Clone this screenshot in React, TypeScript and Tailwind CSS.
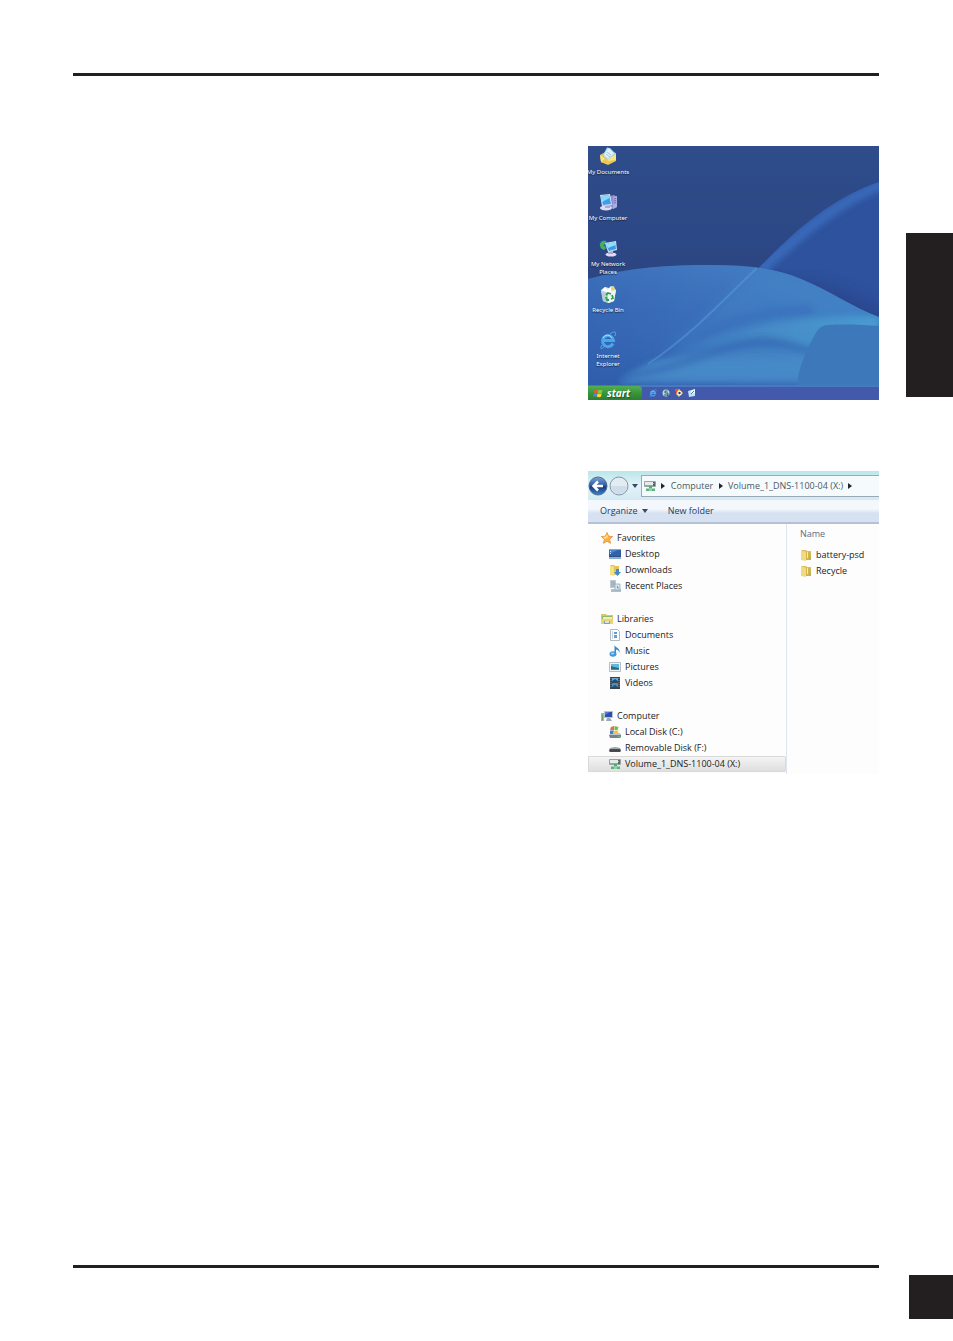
import { useState } from "react";
import type { ReactNode } from "react";

const DocumentsIcon = () => (
  <svg viewBox="0 0 18 18" className="size-[18px]" aria-hidden="true">
    <path d="M1 8 8 4l9 2v8l-8 4-7-3z" fill="#e8c14a" />
    <path d="m4 8 4-7.500 3 .5 5 5-1 5-7 2z" fill="#a9d3ee" />
    <path d="m5 8 4-6.500 2 1 4 4-6 5z" fill="#e3f3fc" />
    <path d="m8 5 4 3M7 7l4 3" stroke="#7db5dd" strokeWidth=".8" />
    <path d="m1 8 7 5 9-6v6l-8 4-7-2z" fill="#f8e583" />
    <path d="m2 15 5-4 2 3 8-1-8 4z" fill="#edc64f" />
  </svg>
);

const ComputerIcon = () => (
  <svg viewBox="0 0 18 18" className="size-[18px]" aria-hidden="true">
    <path d="m11 3 4-1 3 2v10l-4 2-3-2z" fill="#8d91cf" />
    <path d="m14 4 4-1v11l-4 2z" fill="#a9addf" />
    <path d="M14.500 6 17 5.500M14.500 8 17 7.500M14.500 10l2.500-.5" stroke="#5558a2" strokeWidth=".7" />
    <ellipse cx="7" cy="15" rx="6" ry="2.500" fill="#dddcf3" />
    <path d="M6 11h5v4H6z" fill="#aaa8d8" />
    <path d="m1 2 10-1 2 11-10 1z" fill="#d4e1f5" />
    <path d="m2 3 8-1 2 9-8 1z" fill="#3e9de8" />
    <path d="m2 3 8-1 .6 3L3 9z" fill="#85d9fb" />
  </svg>
);

const NetworkIcon = () => (
  <svg viewBox="0 0 18 18" className="size-[18px]" aria-hidden="true">
    <circle cx="5" cy="6" r="4.500" fill="#2861bb" />
    <path d="M1 5c1-3 4-4 6-3L6 5 4 6l3 3-2 2C2 10 1 8 1 5" fill="#48b351" />
    <ellipse cx="12" cy="15.500" rx="5.500" ry="2" fill="#dedcf2" />
    <path d="M9 11h5v4H9z" fill="#aba9d5" />
    <path d="m6 4 11-2 1 9-9 2z" fill="#d2e2f5" />
    <path d="m7 5 9-2 1 7-7 2z" fill="#3b9be6" />
    <path d="m7 5 9-2 .5 3L9 9z" fill="#8ce2fc" />
  </svg>
);

const RecycleIcon = () => (
  <svg viewBox="0 0 18 18" className="size-[18px]" aria-hidden="true">
    <path d="m2 5 4-3 4 1 3-2 4 4-2 11-5 2-6-2z" fill="#dbe8ed" />
    <path d="m3 5 3-3 3 3 3-4 3 4-5 3z" fill="#fff" />
    <path d="m12 2 3-1 1 4-4 1z" fill="#e9d86a" />
    <path d="m2 6 7 2v10l-5-2z" fill="#b9cdd6" />
    <path d="m9 8 8-3-2 11-6 2z" fill="#edf5f5" />
    <path d="m7 10 2-2 3 1M13 10l1 3-2 1M10 15H8l-1-3" fill="none" stroke="#28a448" strokeWidth="1.800" />
  </svg>
);

const ExplorerIcon = ({ small = false }: { small?: boolean }) => (
  <svg viewBox="0 0 18 18" className={small ? "size-2" : "size-[18px]"} aria-hidden="true">
    <path
      d="M14 12.500A5.500 5.500 0 1 1 14.500 9.500H4"
      fill="none"
      stroke="#4aa6ea"
      strokeWidth="3"
    />
    <path d="M4 7a5 5 0 0 1 9 0" fill="none" stroke="#a4e0ff" strokeWidth="1" />
    <path
      d="M3 14C0 19 3 18 6 15M11 3c4-3 7-3 5 2"
      fill="none"
      stroke="#5fa9df"
      strokeWidth="1"
    />
  </svg>
);

const WindowsFlag = () => (
  <svg viewBox="0 0 12 12" className="size-[10px]" aria-hidden="true">
    <path d="M2 2q2-1 4 0L5 6Q3 5 1 6z" fill="#f05a2d" />
    <path d="M6.500 2q2 1 5 0l-1 4q-2 1-5 0z" fill="#7fcc3c" />
    <path d="M1 6.500q2-1 4 0l-1 4q-2-1-4 0z" fill="#4a86e8" />
    <path d="M5.500 6.500q2 1 5 0l-1 4q-2 1-5 0z" fill="#fbd43a" />
  </svg>
);

const Wallpaper = () => (
  <svg
    viewBox="0 0 291 239"
    preserveAspectRatio="none"
    className="absolute inset-0 size-full"
    aria-hidden="true"
  >
    <defs>
      <linearGradient id="sky" x1="0" y1="0" x2="0" y2="1">
        <stop offset="0" stopColor="#2e4d8a" />
        <stop offset=".5" stopColor="#2c4684" />
      </linearGradient>
      <linearGradient id="wave" x1="0" y1="0" x2="1" y2=".2">
        <stop offset="0" stopColor="#3363b1" />
        <stop offset=".5" stopColor="#3c73bd" />
        <stop offset="1" stopColor="#4289c9" />
      </linearGradient>
      <linearGradient id="waveShade" x1="0" y1="0" x2="0" y2="1">
        <stop offset="0" stopColor="#4c86c8" stopOpacity=".4" />
        <stop offset=".4" stopColor="#3868b5" stopOpacity=".3" />
        <stop offset="1" stopColor="#2950a0" stopOpacity=".5" />
      </linearGradient>
      <linearGradient id="ribbon" x1="0" y1="0" x2="1" y2="0">
        <stop offset="0" stopColor="#3d77c0" />
        <stop offset=".5" stopColor="#4890ca" />
        <stop offset="1" stopColor="#4ba1d4" />
      </linearGradient>
      <linearGradient id="floor" x1="0" y1="0" x2="0" y2="1">
        <stop offset="0" stopColor="#3c73bb" />
        <stop offset=".55" stopColor="#4a8fcb" />
        <stop offset=".9" stopColor="#488bca" />
        <stop offset="1" stopColor="#3d76bc" />
      </linearGradient>
      <filter id="soft" x="-20%" y="-40%" width="140%" height="180%">
        <feGaussianBlur stdDeviation="3" />
      </filter>
      <filter id="wide" x="-40%" y="-60%" width="180%" height="220%">
        <feGaussianBlur stdDeviation="7" />
      </filter>
      <filter id="edge">
        <feGaussianBlur stdDeviation=".7" />
      </filter>
      <clipPath id="waveClip">
        <path d="M0 133C42 121 82 119 123 119c30 0 62 2 90 14 28 11 51 28 78 38v68H0z" />
      </clipPath>
      <clipPath id="arcClip">
        <path d="M291 36C225 58 185 110 150 142L200 239h91z" />
      </clipPath>
    </defs>
    <rect width="291" height="239" fill="url(#sky)" />
    <path d="M291 36C225 58 185 110 150 142v60h141z" fill="#2e529d" />
    <g clipPath="url(#arcClip)">
      <path d="M300 36C235 60 190 110 150 144" fill="none" stroke="#3c70c1" strokeWidth="11" opacity=".8" filter="url(#soft)" />
      <path d="M150 150c30-10 90 0 150 34" fill="none" stroke="#2a438a" strokeWidth="34" opacity=".7" filter="url(#wide)" />
    </g>
    <path
      d="M0 133C42 121 82 119 123 119c30 0 62 2 90 14 28 11 51 28 78 38v68H0z"
      fill="url(#wave)"
      filter="url(#edge)"
    />
    <g clipPath="url(#waveClip)">
      <rect y="119" width="291" height="120" fill="url(#waveShade)" />
      <path d="M169 122C145 146 112 180 70 208l80-20 141-19-60-30z" fill="#4a8bca" opacity=".35" filter="url(#wide)" />
      <path d="M110 190c35-18 75-26 115-26" fill="none" stroke="#396eba" strokeWidth="10" opacity=".6" filter="url(#soft)" />
      <path d="M169 122C145 144 110 184 60 218" fill="none" stroke="#5b9dda" strokeWidth="2" opacity=".5" filter="url(#edge)" />
      <path d="M80 207c60-21 108-39 211-37v40l-80 4c-40-16-75-13-131-7" fill="url(#ribbon)" opacity=".85" filter="url(#soft)" />
      <path d="M70 214c48-10 88-24 115-20 16 2 26 8 38 10v34H30c8-8 14-14 40-24" fill="url(#floor)" opacity=".9" filter="url(#soft)" />
      <path d="M32 232c70-11 105-37 148-36 18 0 30 7 45 9" fill="none" stroke="#3468b2" strokeWidth="6" opacity=".75" filter="url(#soft)" />
      <path d="M20 238h190" stroke="#3565b2" strokeWidth="3" opacity=".7" filter="url(#edge)" />
    </g>
    <path d="M209 239c1-15 8-32 15-45 5-10 8-15 17-15 17-1 34 0 50 1v59z" fill="#3d78ba" filter="url(#edge)" />
  </svg>
);

const desktopItems: { label: string; icon: ReactNode }[] = [
  { label: "My Documents", icon: <DocumentsIcon /> },
  { label: "My Computer", icon: <ComputerIcon /> },
  { label: "My Network Places", icon: <NetworkIcon /> },
  { label: "Recycle Bin", icon: <RecycleIcon /> },
  { label: "Internet Explorer", icon: <ExplorerIcon /> },
];

const quickLaunch: { label: string; icon: ReactNode }[] = [
  { label: "Internet Explorer", icon: <ExplorerIcon small /> },
  {
    label: "Search",
    icon: (
      <svg viewBox="0 0 8 8" className="size-2" aria-hidden="true">
        <circle cx="4" cy="4" r="3.500" fill="#b9d8dc" />
        <path d="M5.500 2H3v2h3v2H2" fill="none" stroke="#236c69" />
        <path d="m5 6 3 2" stroke="#3b4c5d" />
      </svg>
    ),
  },
  {
    label: "Media Player",
    icon: (
      <svg viewBox="0 0 8 8" className="size-2" aria-hidden="true">
        <path d="M0 0h5v4H1z" fill="#ed5145" />
        <path d="m4 0 4 4-4 4-3-3z" fill="#f4c94a" />
        <circle cx="4.500" cy="4" r="2.200" fill="#fff" />
        <circle cx="4.500" cy="4" r="1.200" fill="#26384f" />
      </svg>
    ),
  },
  {
    label: "Show Desktop",
    icon: (
      <svg viewBox="0 0 8 8" className="size-2" aria-hidden="true">
        <path d="m0 2 7-2v7L1 8z" fill="#bfe0f4" />
        <path d="m3 2 4-2v4L3 5z" fill="#f5fcff" />
        <path d="m3 5 3-3" stroke="#3180b4" />
      </svg>
    ),
  },
];

const DesktopFigure = () => (
  <figure className="flex flex-col overflow-hidden font-['Noto_Sans',sans-serif]">
    <div className="relative h-[239px]">
      <Wallpaper />
      <ul className="relative grid w-10 auto-rows-[46px] pt-px">
        {desktopItems.map((item) => (
          <li key={item.label}>
            <button type="button" className="flex w-full flex-col items-center gap-[3px]">
              {item.icon}
              <span className="-mx-1 text-center text-[6px] leading-2 text-white [text-shadow:0_1px_1px_#10203c]">
                {item.label}
              </span>
            </button>
          </li>
        ))}
      </ul>
    </div>
    <div className="flex h-[15px] items-stretch border-t-2 border-[#4a78be] bg-[#4259ac]">
      <button
        type="button"
        className="-mt-px flex w-[54px] items-center gap-1 rounded-r bg-linear-to-b from-[#53ae52] via-[#38963a] to-[#2d7f32] pl-[5px] text-[10px] leading-3 font-bold text-white italic [text-shadow:1px_1px_1px_#1c5522]"
      >
        <WindowsFlag />
        start
      </button>
      <div className="flex items-center gap-[5px] pb-px pl-[7px]">
        {quickLaunch.map((item) => (
          <button key={item.label} type="button" aria-label={item.label}>
            {item.icon}
          </button>
        ))}
      </div>
    </div>
  </figure>
);

const StarIcon = () => (
  <svg viewBox="0 0 12 12" className="size-3" aria-hidden="true">
    <path
      d="m6 .5 1.600 3.700 4 .4-3 2.700.9 4L6 9.200l-3.500 2.100.9-4-3-2.700 4-.4z"
      fill="#fbb43e"
      stroke="#e58a3c"
      strokeWidth=".8"
    />
    <path d="m6 2 1 3-3 2-2-2 3-.5z" fill="#ffe38d" />
  </svg>
);

const ScreenIcon = () => (
  <svg viewBox="0 0 12 12" className="size-3" aria-hidden="true">
    <path d="M0 1.500h12v9H0z" fill="#2c4f8c" />
    <path d="M.5 2h11v6H.5z" fill="#2f62a8" />
    <path d="M.5 2H9L.5 6z" fill="#4a86c8" />
    <path d="M0 9h12v1.500H0z" fill="#8fb1d7" />
    <path d="M1 3h1v1H1zM1 5h1v1H1z" fill="#d4e9fb" />
  </svg>
);

const FolderIcon = () => (
  <svg viewBox="0 0 12 12" className="size-3" aria-hidden="true">
    <path d="M1 1h5l1 1h4v9H1z" fill="#dfc05c" />
    <path d="m1 1 5 2v9l-5-1z" fill="#f2da80" />
    <path d="M6 3h4l1 2v6H6z" fill="#d3b54e" />
    <path d="M7 3h1v6H7z" fill="#f8edb6" />
    <path d="M9 8h2v3H9z" fill="#a7b66b" />
  </svg>
);

const DownloadsIcon = () => (
  <svg viewBox="0 0 12 12" className="size-3" aria-hidden="true">
    <path d="M1 1h4l1 1h4v9H1z" fill="#e2c35c" />
    <path d="m1 1 4 2v9l-4-1z" fill="#f6df89" />
    <path d="M7 5h3v3h2l-3.500 4L5 8h2z" fill="#3c8bcd" />
  </svg>
);

const RecentIcon = () => (
  <svg viewBox="0 0 12 12" className="size-3" aria-hidden="true">
    <path d="M1 0h6v8H1z" fill="#c3cbd2" />
    <path d="M2 2h4M2 4h4M2 6h3" stroke="#7b8b99" strokeWidth=".7" />
    <path d="M2 9h10v3H2z" fill="#b3bfc8" />
    <path d="M6 4h5v6H6z" fill="#d8e8f1" stroke="#7ba6bf" strokeWidth=".7" />
    <path d="M8.500 6v2H10" fill="none" stroke="#477b9f" strokeWidth=".7" />
  </svg>
);

const LibrariesIcon = () => (
  <svg viewBox="0 0 12 12" className="size-3" aria-hidden="true">
    <path d="M0 1h5l1 1h6v8H0z" fill="#e4c45e" />
    <path d="M1 3h10v5H1z" fill="#84bd73" />
    <path d="M2 4h9v3H2z" fill="#f7edae" />
    <path d="M0 6h12v5H0z" fill="#edd272" />
    <path d="M3 8h6v3H3z" fill="#6aabd5" />
    <path d="M4 8h4v2H4z" fill="#c9e4f2" />
  </svg>
);

const PageIcon = () => (
  <svg viewBox="0 0 12 12" className="size-3" aria-hidden="true">
    <path d="M1.500.5h7l2 2v9h-9z" fill="#fbfdff" stroke="#9ba9b8" strokeWidth=".8" />
    <path d="M5 3h3v2H5z" fill="#5b9dd2" />
    <path d="M5 6h3v3H5z" fill="#6a9dcc" />
    <path d="M3 3h1M3 5h1M3 7h1M3 9h1" stroke="#8fa4b7" />
  </svg>
);

const MusicIcon = () => (
  <svg viewBox="0 0 12 12" className="size-3" aria-hidden="true">
    <path d="M5.500 9V0c1 3 6 3 5 8-.5-2-1-3-3.500-3.500V9z" fill="#3188cf" />
    <ellipse cx="4" cy="9" rx="3.500" ry="2.700" fill="#4299da" />
    <ellipse cx="3.500" cy="8.500" rx="1.500" ry="1" fill="#a5daf4" />
  </svg>
);

const PicturesIcon = () => (
  <svg viewBox="0 0 12 12" className="size-3" aria-hidden="true">
    <path d="M.5 1.500h11v9H.5z" fill="#eff3f6" stroke="#a4b0bb" strokeWidth=".8" />
    <path d="M2 3h8v6H2z" fill="#63b8dc" />
    <path d="m2 5 3 1 5 1v2H2z" fill="#286c80" />
    <path d="M2 8h8v1H2z" fill="#4a9a64" />
  </svg>
);

const VideosIcon = () => (
  <svg viewBox="0 0 12 12" className="size-3" aria-hidden="true">
    <path d="M1 0h10v12H1z" fill="#38444f" />
    <path d="M3 1h6v4H3z" fill="#68aad3" />
    <path d="M3 6h6v5H3z" fill="#4a8fbd" />
    <path d="m3 4 3-2 3 2v1H3zM3 10l3-2 3 2v1H3z" fill="#245077" />
    <path d="M2 1v10M10 1v10" stroke="#a5afb7" strokeDasharray="1 1" strokeWidth=".7" />
  </svg>
);

const PcIcon = () => (
  <svg viewBox="0 0 12 12" className="size-3" aria-hidden="true">
    <path d="M0 3h3v8H0z" fill="#a7b1ae" />
    <path d="M1 5h1v5H1z" fill="#68a460" />
    <path d="M3 1h9v7H3z" fill="#b8c4d4" />
    <path d="M4 2h7v5H4z" fill="#2b4fac" />
    <path d="M4 2h5L4 5z" fill="#5980cc" />
    <path d="M6 8h3l2 3H5z" fill="#9ca8b7" />
  </svg>
);

const LocalDiskIcon = () => (
  <svg viewBox="0 0 12 12" className="size-3" aria-hidden="true">
    <path d="m2 8 8-1 2 2v2l-1 1H1L0 9z" fill="#77828b" />
    <path d="m1 8 9-1 2 2H0z" fill="#c1c9ce" />
    <path d="M9 10h2v1H9z" fill="#5bc65b" />
    <path d="m2 1 3-1v4H1z" fill="#ed6a40" />
    <path d="m5.500 0 4 1-1 3h-3z" fill="#74b951" />
    <path d="M1 4.500h4L4 8H1z" fill="#4182cf" />
    <path d="M5.500 4.500h4l-1 3h-4z" fill="#f2c640" />
  </svg>
);

const RemovableIcon = () => (
  <svg viewBox="0 0 12 12" className="size-3" aria-hidden="true">
    <path d="M1 6q5-1 10 0l1 3-1 1H1L0 9z" fill="#464b52" />
    <path d="M1 6q5-1 10 0v1H1z" fill="#a3a7ac" />
  </svg>
);

const NetworkDriveIcon = () => (
  <svg viewBox="0 0 12 12" className="size-3" aria-hidden="true">
    <rect y="1" width="12" height="6" rx="1" fill="#98a3a5" />
    <path d="M1 2h9v3H1z" fill="#e6ebea" />
    <path d="M9 2h2v4H9z" fill="#5b666a" />
    <path d="M9 3h1v1H9z" fill="#6ccf72" />
    <path d="M5 6h3v3H5z" fill="#58a873" />
    <path d="M2 8.500h9v2.500H2z" fill="#5bb57c" />
    <path d="M5 8h3v3H5z" fill="#8bd3a0" />
  </svg>
);

const ArrowRight = () => (
  <svg viewBox="0 0 4 6" className="h-[6px] w-1 shrink-0" aria-hidden="true">
    <path d="m0 0 4 3-4 3z" fill="#20262c" />
  </svg>
);

const ArrowDown = () => (
  <svg viewBox="0 0 6 4" className="h-1 w-[6px] shrink-0" aria-hidden="true">
    <path d="M0 0h6L3 4z" fill="#304c70" />
  </svg>
);

const navGroups = [
  {
    label: "Favorites",
    icon: <StarIcon />,
    items: [
      { label: "Desktop", icon: <ScreenIcon /> },
      { label: "Downloads", icon: <DownloadsIcon /> },
      { label: "Recent Places", icon: <RecentIcon /> },
    ],
  },
  {
    label: "Libraries",
    icon: <LibrariesIcon />,
    items: [
      { label: "Documents", icon: <PageIcon /> },
      { label: "Music", icon: <MusicIcon /> },
      { label: "Pictures", icon: <PicturesIcon /> },
      { label: "Videos", icon: <VideosIcon /> },
    ],
  },
  {
    label: "Computer",
    icon: <PcIcon />,
    items: [
      { label: "Local Disk (C:)", icon: <LocalDiskIcon /> },
      { label: "Removable Disk (F:)", icon: <RemovableIcon /> },
      { label: "Volume_1_DNS-1100-04 (X:)", icon: <NetworkDriveIcon /> },
    ],
  },
];

const files = ["battery-psd", "Recycle"];

const AddressBar = () => (
  <div className="flex h-[29px] items-center bg-linear-to-b from-[#b9e6e9] via-[#e3f3f8] to-[#d3e9f3]">
    <button type="button" aria-label="Back" className="shrink-0">
      <svg viewBox="0 0 20 20" className="size-5" aria-hidden="true">
        <defs>
          <linearGradient id="back" x1="0" y1="0" x2="0" y2="1">
            <stop offset="0" stopColor="#7fa3d5" />
            <stop offset=".45" stopColor="#315ea9" />
            <stop offset=".55" stopColor="#19397e" />
            <stop offset="1" stopColor="#3a88ca" />
          </linearGradient>
        </defs>
        <circle cx="10" cy="10" r="9" fill="url(#back)" stroke="#506b93" />
        <path d="M15 10H6M10 5.500 5.500 10l4.500 4.500" fill="none" stroke="#fff" strokeWidth="2.500" />
      </svg>
    </button>
    <button type="button" aria-label="Forward" className="ml-px shrink-0">
      <svg viewBox="0 0 20 20" className="size-5" aria-hidden="true">
        <circle cx="10" cy="10" r="9" fill="#e3ecf3" stroke="#8195aa" />
        <path d="M2 10a8 8 0 0 0 16 0z" fill="#cfdde8" />
      </svg>
    </button>
    <button type="button" aria-label="Recent locations" className="ml-[3px] shrink-0">
      <ArrowDown />
    </button>
    <nav
      aria-label="Address"
      className="ml-[3px] flex h-[22px] min-w-0 flex-1 items-center border border-r-0 border-[#9aaab6] bg-[#f5fbfd] pl-[2px] text-[#4c5963]"
    >
      <NetworkDriveIcon />
      <span className="ml-[5px]">
        <ArrowRight />
      </span>
      <button type="button" className="ml-[5px] w-11">
        Computer
      </button>
      <span className="ml-[5px]">
        <ArrowRight />
      </span>
      <button type="button" className="ml-[5px] whitespace-nowrap">
        Volume_1_DNS-1100-04 (X:)
      </button>
      <span className="ml-[5px]">
        <ArrowRight />
      </span>
    </nav>
  </div>
);

const ExplorerFigure = () => {
  const [selected, setSelected] = useState("Volume_1_DNS-1100-04 (X:)");

  return (
    <figure className="overflow-hidden bg-[#fdfdfd] font-['Open_Sans',sans-serif] text-[9px] leading-4 text-[#222]">
      <AddressBar />
      <div className="flex h-6 items-center gap-5 border-b-2 border-[#b5c2d6] bg-linear-to-b from-[#f4f8fd] from-40% to-[#d6e2f1] to-60% pl-3 text-[#263c60]">
        <button type="button" className="flex items-center gap-1">
          Organize
          <ArrowDown />
        </button>
        <button type="button">New folder</button>
      </div>
      <div className="flex">
        <nav
          aria-label="Folders"
          className="flex w-[199px] shrink-0 flex-col gap-[17px] border-r border-[#dce6f0] pt-[6px] pb-[2px]"
        >
          {navGroups.map((group) => (
            <div key={group.label}>
              <button type="button" className="flex h-4 items-center gap-1 pl-[13px]">
                {group.icon}
                {group.label}
              </button>
              <ul>
                {group.items.map((item) => (
                  <li key={item.label}>
                    <button
                      type="button"
                      onClick={() => setSelected(item.label)}
                      className={`flex h-4 w-full items-center gap-1 pl-[21px] whitespace-nowrap ${
                        selected === item.label
                          ? "rounded-r-xs bg-linear-to-b from-[#f5f5f5] to-[#dedede] shadow-[inset_0_0_0_1px_#d9d9d9]"
                          : ""
                      }`}
                    >
                      {item.icon}
                      {item.label}
                    </button>
                  </li>
                ))}
              </ul>
            </div>
          ))}
        </nav>
        <div className="flex-1 pl-[13px]">
          <table className="text-left">
            <thead>
              <tr>
                <th className="h-[23px] p-0 pb-1 font-normal text-[#5f6a84]">Name</th>
              </tr>
            </thead>
            <tbody>
              {files.map((name) => (
                <tr key={name}>
                  <td className="p-0">
                    <button type="button" className="flex h-4 items-center gap-1">
                      <FolderIcon />
                      {name}
                    </button>
                  </td>
                </tr>
              ))}
            </tbody>
          </table>
        </div>
      </div>
    </figure>
  );
};

const App = () => {
  return (
    <div className="flex min-h-screen bg-white">
      <main className="flex flex-1 flex-col py-[73px] pl-[73px]">
        <hr className="h-[3px] border-0 bg-[#231f20]" />
        <div className="mt-[70px] mb-[70px] flex w-[291px] flex-col gap-[71px] self-end">
          <DesktopFigure />
          <ExplorerFigure />
        </div>
        <hr className="mt-auto h-[3px] border-0 bg-[#231f20]" />
      </main>
      <aside className="flex w-[74px] shrink-0 flex-col items-end justify-between pt-[233px] pb-[22px]">
        <div className="h-[164px] w-[47px] bg-[#231f20]" />
        <div className="size-11 bg-[#231f20]" />
      </aside>
    </div>
  );
};

export default App;
